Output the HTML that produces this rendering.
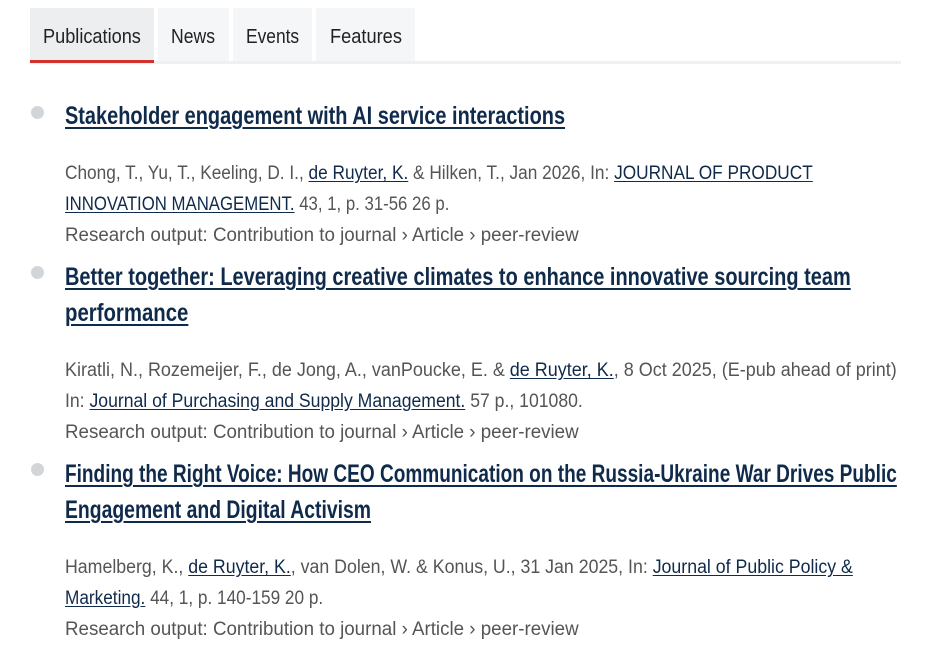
<!DOCTYPE html>
<html><head><meta charset="utf-8"><style>
body{margin:0;width:934px;height:648px;background:#fff;position:relative;overflow:hidden;font-family:"Liberation Sans",Arial,sans-serif}
.tab{position:absolute;top:8px;height:54px;background:#f5f6f7}
.tt{position:absolute;top:25px;font-size:20px;color:#222;line-height:24px;white-space:nowrap}
.ln{position:absolute;left:65px;white-space:nowrap;transform-origin:0 50%}
.t{font-weight:bold;font-size:25px;color:#0f2a4a;text-decoration:underline;text-decoration-thickness:2px;text-underline-offset:3px;line-height:30px}
.b{font-size:19px;color:#555;line-height:24px}
.b a{color:#0f2a4a;text-decoration:underline;text-underline-offset:2px}
.dot{position:absolute;left:31px;width:13px;height:13px;border-radius:50%;background:#d3d6d9}
</style></head><body>
<div class="tab" style="left:30px;width:124px;background:#eceef0"></div>
<div class="tab" style="left:158px;width:71px"></div>
<div class="tab" style="left:233px;width:79px"></div>
<div class="tab" style="left:316px;width:99px"></div>
<div style="position:absolute;left:30px;top:61px;width:871px;height:3px;background:#eef0f1"></div>
<div style="position:absolute;left:30px;top:60px;width:124px;height:3px;background:#d3322b"></div>
<div class="tt ln" style="left:43px;top:25px" data-w="98">Publications</div>
<div class="tt ln" style="left:171px;top:25px" data-w="44">News</div>
<div class="tt ln" style="left:246px;top:25px" data-w="53">Events</div>
<div class="tt ln" style="left:330px;top:25px" data-w="72">Features</div>

<div class="dot" style="top:106px"></div>
<div class="ln t" style="top:101px" data-w="500">Stakeholder engagement with AI service interactions</div>
<div class="ln b" style="top:162px" data-w="748">Chong, T., Yu, T., Keeling, D. I., <a>de Ruyter, K.</a> &amp; Hilken, T., Jan 2026, In: <a>JOURNAL OF PRODUCT</a></div>
<div class="ln b" style="top:193px" data-w="384"><a>INNOVATION MANAGEMENT.</a> 43, 1, p. 31-56 26 p.</div>
<div class="ln b" style="top:224px" data-w="514">Research output: Contribution to journal › Article › peer-review</div>

<div class="dot" style="top:266px"></div>
<div class="ln t" style="top:262px" data-w="786">Better together: Leveraging creative climates to enhance innovative sourcing team</div>
<div class="ln t" style="top:298px" data-w="123">performance</div>
<div class="ln b" style="top:359px" data-w="832">Kiratli, N., Rozemeijer, F., de Jong, A., vanPoucke, E. &amp; <a>de Ruyter, K.</a>, 8 Oct 2025, (E-pub ahead of print)</div>
<div class="ln b" style="top:390px" data-w="518">In: <a>Journal of Purchasing and Supply Management.</a> 57 p., 101080.</div>
<div class="ln b" style="top:421px" data-w="514">Research output: Contribution to journal › Article › peer-review</div>

<div class="dot" style="top:463px"></div>
<div class="ln t" style="top:459px" data-w="832">Finding the Right Voice: How CEO Communication on the Russia-Ukraine War Drives Public</div>
<div class="ln t" style="top:495px" data-w="306">Engagement and Digital Activism</div>
<div class="ln b" style="top:556px" data-w="788">Hamelberg, K., <a>de Ruyter, K.</a>, van Dolen, W. &amp; Konus, U., 31 Jan 2025, In: <a>Journal of Public Policy &amp;</a></div>
<div class="ln b" style="top:587px" data-w="258"><a>Marketing.</a> 44, 1, p. 140-159 20 p.</div>
<div class="ln b" style="top:618px" data-w="514">Research output: Contribution to journal › Article › peer-review</div>
<script>
document.querySelectorAll('.ln').forEach(function(e){var w=+e.getAttribute('data-w');var s=w/e.scrollWidth;e.style.transform='scaleX('+s+')';});
</script>
</body></html>
